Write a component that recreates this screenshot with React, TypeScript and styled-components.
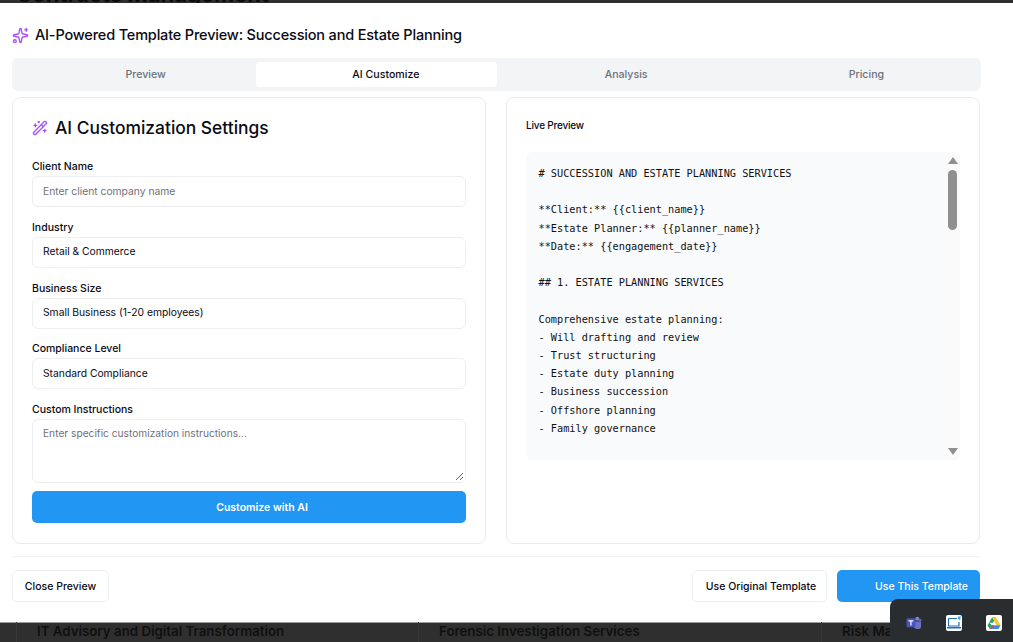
import React from 'react';
import styled, { createGlobalStyle } from 'styled-components';
import { Sparkles, WandSparkles } from 'lucide-react';

const GlobalStyle = createGlobalStyle`
  html, body {
    margin: 0;
    padding: 0;
    background: #2f2f2f;
    overflow: hidden;
  }
  * {
    box-sizing: border-box;
  }
`;

const Page = styled.div`
  position: relative;
  width: 1013px;
  height: 642px;
  display: flex;
  flex-direction: column;
  overflow: hidden;
  background: #2f2f2f;
  font-family: Inter, 'Liberation Sans', sans-serif;
  color: #0a0a14;
`;

const BackdropTop = styled.div`
  height: 3px;
  flex: none;
  overflow: hidden;
  padding-left: 16px;
  display: flex;
  align-items: flex-end;
`;

const BackdropHeading = styled.div`
  font-size: 22px;
  line-height: 26px;
  font-weight: 700;
  color: #0b0b0b;
  white-space: nowrap;
  flex: none;
  margin-bottom: -4px;
`;

const BackdropBottom = styled.div`
  height: 20px;
  flex: none;
  overflow: hidden;
  display: grid;
  grid-template-columns: 402px 403px 208px;
  padding-left: 16px;
`;

const BackdropCell = styled.div`
  padding-left: 20px;
  border-left: 1px solid #383838;
  font-size: 13.3px;
  line-height: 18px;
  font-weight: 600;
  color: #0f0f0f;
  white-space: nowrap;
`;

const Modal = styled.div`
  height: 619px;
  flex: none;
  background: #fff;
  padding: 22px 32px 0 12px;
  display: flex;
  flex-direction: column;
  box-shadow: 0 1px 0 #9a9a9a;
`;

const TitleRow = styled.div`
  display: flex;
  align-items: center;
  gap: 6px;
  height: 20px;
  color: #a855f7;
`;

const Title = styled.h2`
  margin: 0;
  font-size: 14.5px;
  letter-spacing: -0.18px;
  line-height: 20px;
  font-weight: 500;
  color: #0a0a14;
  white-space: nowrap;
`;

const Tabs = styled.div`
  margin-top: 13px;
  width: 969px;
  height: 33px;
  padding: 4px;
  background: #f3f4f6;
  border-radius: 6px;
  display: grid;
  grid-template-columns: repeat(4, 1fr);
`;

const Tab = styled.div<{ $active?: boolean }>`
  display: flex;
  align-items: center;
  justify-content: center;
  height: 25px;
  padding-left: 19px;
  border-radius: 4px;
  font-size: 10.6px;
  font-weight: 500;
  color: ${p => (p.$active ? '#0a0a14' : '#6b7280')};
  background: ${p => (p.$active ? '#fff' : 'transparent')};
`;

const Columns = styled.div`
  margin-top: 6px;
  display: grid;
  grid-template-columns: 474px 474px;
  gap: 20px;
`;

const Card = styled.section`
  height: 447px;
  border: 1.5px solid #e9eaed;
  border-radius: 8px;
  background: #fff;
`;

const SettingsCard = styled(Card)`
  padding: 18px 19px 0;
`;

const PreviewCard = styled(Card)`
  padding: 20px 19px 0;
`;

const CardTitleRow = styled.div`
  display: flex;
  align-items: center;
  gap: 7px;
  height: 24px;
  color: #a855f7;
`;

const CardTitle = styled.h3`
  margin: 0;
  font-size: 17.4px;
  line-height: 24px;
  font-weight: 500;
  color: #0a0a14;
  white-space: nowrap;
`;

const Fields = styled.div`
  margin-top: 20px;
  display: flex;
  flex-direction: column;
`;

const Field = styled.div`
  display: flex;
  flex-direction: column;
  margin-bottom: 13.75px;
`;

const Label = styled.label`
  font-size: 10.5px;
  line-height: 14px;
  height: 14px;
  font-weight: 500;
  margin-bottom: 2px;
  color: #0a0a14;
`;

const InputBox = styled.div<{ $placeholder?: boolean }>`
  height: 31px;
  border: 1.5px solid #eceef0;
  border-radius: 6px;
  padding: 0 10px 2px;
  display: flex;
  align-items: center;
  font-size: 10.3px;
  color: ${p => (p.$placeholder ? '#71717a' : '#0a0a14')};
`;

const TextArea = styled.div`
  position: relative;
  height: 64px;
  border: 1.5px solid #eceef0;
  border-radius: 6px;
  padding: 6px 10px;
  font-size: 10.2px;
  line-height: 15px;
  color: #71717a;
`;

const ResizeGrip = styled.svg`
  position: absolute;
  right: 1px;
  bottom: 1px;
`;

const PrimaryButton = styled.button`
  height: 32px;
  border: none;
  border-radius: 5px;
  background: #2196f3;
  color: #fff;
  font-family: inherit;
  font-size: 10.5px;
  font-weight: 600;
`;

const CustomizeButton = styled(PrimaryButton)`
  width: 434px;
  margin-top: -5.75px;
  padding: 0 0 0 26px;
`;

const PreviewLabel = styled.div`
  font-size: 10px;
  line-height: 14px;
  font-weight: 500;
  letter-spacing: -0.2px;
`;

const PreviewBox = styled.div`
  margin-top: 20px;
  width: 434px;
  height: 308px;
  border-radius: 6px;
  background: #f9fafb;
  display: flex;
  overflow: hidden;
`;

const Code = styled.pre`
  flex: 1;
  margin: 0;
  padding: 12px 12px 12px 12.5px;
  font-family: 'DejaVu Sans Mono', 'Liberation Mono', monospace;
  font-size: 10.25px;
  line-height: 18.2px;
  color: #111;
  overflow: hidden;
`;

const ScrollRail = styled.div`
  width: 15px;
  flex: none;
  display: flex;
  flex-direction: column;
  align-items: center;
  background: #fafafa;
  padding-top: 5px;
`;

const ScrollArrow = styled.div<{ $down?: boolean }>`
  width: 0;
  height: 0;
  border-left: 5px solid transparent;
  border-right: 5px solid transparent;
  ${p => (p.$down ? 'border-top: 7px solid #8f8f8f;' : 'border-bottom: 7px solid #8f8f8f;')}
`;

const ScrollThumb = styled.div`
  width: 9px;
  height: 60px;
  margin-top: 6px;
  border-radius: 5px;
  background: #8f8f8f;
`;

const ScrollGap = styled.div`
  flex: 1;
`;

const ScrollEnd = styled.div`
  height: 5px;
  flex: none;
`;

const Footer = styled.footer`
  margin-top: 12px;
  width: 968px;
  border-top: 1.5px solid #f0f1f3;
  padding-top: 13px;
  display: flex;
  align-items: center;
  justify-content: space-between;
`;

const FooterRight = styled.div`
  display: flex;
  gap: 10px;
`;

const OutlineButton = styled.button<{ $width: number; $inset?: number }>`
  width: ${p => p.$width}px;
  height: 32px;
  border: 1.5px solid #eceef0;
  border-radius: 5px;
  background: #fff;
  color: #0a0a14;
  font-family: inherit;
  font-size: 10.5px;
  font-weight: 500;
  padding: 0 0 0 ${p => p.$inset ?? 0}px;
`;

const UseButton = styled(PrimaryButton)`
  width: 143px;
  padding: 0 12px 0 0;
  text-align: right;
  font-weight: 500;
`;

const Tray = styled.div`
  position: absolute;
  right: 0;
  bottom: 0;
  width: 123px;
  height: 43px;
  padding: 5px 0 0 16px;
  background: #2a2d2f;
  border-top-left-radius: 8px;
  display: flex;
  align-items: center;
  gap: 24px;
`;

const TrayTile = styled.div`
  width: 16px;
  height: 16px;
  background: #fff;
  border-radius: 2px;
  display: flex;
  align-items: center;
  justify-content: center;
`;

const codeText = `# SUCCESSION AND ESTATE PLANNING SERVICES

**Client:** {{client_name}}
**Estate Planner:** {{planner_name}}
**Date:** {{engagement_date}}

## 1. ESTATE PLANNING SERVICES

Comprehensive estate planning:
- Will drafting and review
- Trust structuring
- Estate duty planning
- Business succession
- Offshore planning
- Family governance`;

const fields = [
  { label: 'Client Name', value: 'Enter client company name', placeholder: true },
  { label: 'Industry', value: 'Retail & Commerce' },
  { label: 'Business Size', value: 'Small Business (1-20 employees)' },
  { label: 'Compliance Level', value: 'Standard Compliance' },
];

const TeamsIcon = () => (
  <svg width="16" height="16" viewBox="0 0 17 16">
    <circle cx="12" cy="3.5" r="2.2" fill="#7b83c9" />
    <circle cx="15" cy="5" r="1.5" fill="#5e66b8" />
    <path d="M8 6.5h8v5a3 3 0 0 1-3 3h-1a4 4 0 0 1-4-4z" fill="#6a72c4" />
    <rect x="0.5" y="3" width="9.5" height="9.5" rx="1" fill="#4b53bc" />
    <path d="M2.7 5.2h5.1v1.2H5.9v4.2H4.6V6.4H2.7z" fill="#fff" />
  </svg>
);

const LaptopIcon = () => (
  <TrayTile>
    <svg width="16" height="16" viewBox="0 0 16 16">
      <path d="M2.5 3.5h8.5M2.5 3.5v7.5h10.5V7" fill="none" stroke="#1b6fb8" strokeWidth="1.2" />
      <rect x="1" y="12" width="14" height="1.5" fill="#1b6fb8" />
      <path d="M12 1l1 1 1-1 1 1-1 1 1 1-2 1-1-2z" fill="#35a6e8" />
    </svg>
  </TrayTile>
);

const DriveIcon = () => (
  <TrayTile>
    <svg width="14" height="13" viewBox="0 0 14 13">
      <path d="M5 0.5h4l-3 5.2H2z" fill="#1fa463" />
      <path d="M9 0.5l4.5 7.8h-4L5 0.5z" fill="#f6c533" />
      <path d="M13.5 8.3l-2 3.7H2.8l2-3.7z" fill="#4285f4" />
      <path d="M2.3 5.4l2.4 2.9-1.9 3.7L0.5 8.3z" fill="#1fa463" />
      <path d="M2.8 12l2-3.7h1.7L4.8 12z" fill="#db4437" />
    </svg>
  </TrayTile>
);

const App: React.FC = () => {
  return (
    <Page>
      <GlobalStyle />
      <BackdropTop>
        <BackdropHeading>Contracts Management</BackdropHeading>
      </BackdropTop>
      <Modal>
        <TitleRow>
          <Sparkles size={17} strokeWidth={2} />
          <Title>AI-Powered Template Preview: Succession and Estate Planning</Title>
        </TitleRow>
        <Tabs>
          <Tab>Preview</Tab>
          <Tab $active>AI Customize</Tab>
          <Tab>Analysis</Tab>
          <Tab>Pricing</Tab>
        </Tabs>
        <Columns>
          <SettingsCard>
            <CardTitleRow>
              <WandSparkles size={16} strokeWidth={2} />
              <CardTitle>AI Customization Settings</CardTitle>
            </CardTitleRow>
            <Fields>
              {fields.map(f => (
                <Field key={f.label}>
                  <Label>{f.label}</Label>
                  <InputBox $placeholder={f.placeholder}>{f.value}</InputBox>
                </Field>
              ))}
              <Field>
                <Label>Custom Instructions</Label>
                <TextArea>
                  Enter specific customization instructions...
                  <ResizeGrip width="9" height="9" viewBox="0 0 9 9">
                    <path d="M1 8l7-7M5 8l3-3" stroke="#555" strokeWidth="0.9" fill="none" />
                  </ResizeGrip>
                </TextArea>
              </Field>
              <CustomizeButton>Customize with AI</CustomizeButton>
            </Fields>
          </SettingsCard>
          <PreviewCard>
            <PreviewLabel>Live Preview</PreviewLabel>
            <PreviewBox>
              <Code>{codeText}</Code>
              <ScrollRail>
                <ScrollArrow />
                <ScrollThumb />
                <ScrollGap />
                <ScrollArrow $down />
                <ScrollEnd />
              </ScrollRail>
            </PreviewBox>
          </PreviewCard>
        </Columns>
        <Footer>
          <OutlineButton $width={97}>Close Preview</OutlineButton>
          <FooterRight>
            <OutlineButton $width={135} $inset={3}>Use Original Template</OutlineButton>
            <UseButton>Use This Template</UseButton>
          </FooterRight>
        </Footer>
      </Modal>
      <BackdropBottom>
        <BackdropCell>IT Advisory and Digital Transformation</BackdropCell>
        <BackdropCell>Forensic Investigation Services</BackdropCell>
        <BackdropCell>Risk Management</BackdropCell>
      </BackdropBottom>
      <Tray>
        <TeamsIcon />
        <LaptopIcon />
        <DriveIcon />
      </Tray>
    </Page>
  );
};

export default App;
